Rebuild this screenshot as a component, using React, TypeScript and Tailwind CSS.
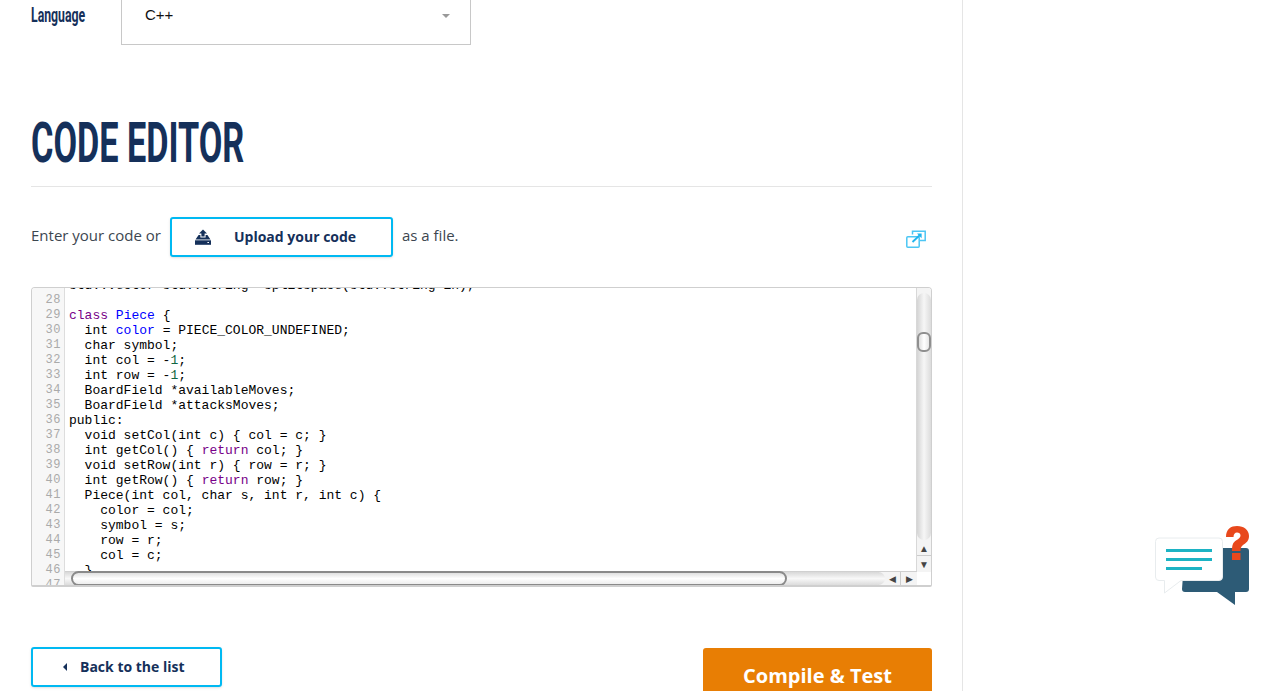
const CODE_LINES: { n: number; parts: [string, string?][] }[] = [
  { n: 27, parts: [["std::vector<std::string> splitspace(std::string in);"]] },
  { n: 28, parts: [[""]] },
  { n: 29, parts: [["class", "text-[#770088]"], [" "], ["Piece", "text-[#0000ff]"], [" {"]] },
  { n: 30, parts: [["  int "], ["color", "text-[#0000ff]"], [" = PIECE_COLOR_UNDEFINED;"]] },
  { n: 31, parts: [["  char symbol;"]] },
  { n: 32, parts: [["  int col = -"], ["1", "text-[#116644]"], [";"]] },
  { n: 33, parts: [["  int row = -"], ["1", "text-[#116644]"], [";"]] },
  { n: 34, parts: [["  BoardField *availableMoves;"]] },
  { n: 35, parts: [["  BoardField *attacksMoves;"]] },
  { n: 36, parts: [["public:"]] },
  { n: 37, parts: [["  void setCol(int c) { col = c; }"]] },
  { n: 38, parts: [["  int getCol() { "], ["return", "text-[#770088]"], [" col; }"]] },
  { n: 39, parts: [["  void setRow(int r) { row = r; }"]] },
  { n: 40, parts: [["  int getRow() { "], ["return", "text-[#770088]"], [" row; }"]] },
  { n: 41, parts: [["  Piece(int col, char s, int r, int c) {"]] },
  { n: 42, parts: [["    color = col;"]] },
  { n: 43, parts: [["    symbol = s;"]] },
  { n: 44, parts: [["    row = r;"]] },
  { n: 45, parts: [["    col = c;"]] },
  { n: 46, parts: [["  }"]] },
  { n: 47, parts: [[""]] },
]

function UploadIcon() {
  return (
    <svg width="16" height="16" viewBox="0 0 16 16" className="text-[#15305a]">
      <path fill="currentColor" d="M8 0.5 L12 4.5 H9.6 V7.5 H6.4 V4.5 H4 Z" />
      <path fill="currentColor" d="M3.6 6 H5.4 V8.6 H10.6 V6 H12.4 L15.5 10.5 H0.5 Z" />
      <path fill="currentColor" d="M0 11.3 H16 V15.8 H0 Z" />
      <rect x="12.4" y="13" width="1.6" height="1" fill="#fff" />
    </svg>
  )
}

function PopoutIcon() {
  return (
    <svg width="20" height="18" viewBox="0 0 20 18" fill="none" stroke="#4cc6f4" strokeWidth="1.5">
      <path d="M6.5 4.5 V1.2 H19.2 V10.5 H14" />
      <rect x="0.8" y="6.8" width="12.4" height="10.4" rx="1" />
      <path d="M6.5 12 L14.5 4.5" strokeWidth="1.8" stroke="#1fb4ee" />
      <path d="M11 3.6 H15.6 V8.2 Z" fill="#1fb4ee" stroke="none" />
    </svg>
  )
}

function ChatIcon() {
  return (
    <svg width="96" height="81" viewBox="0 0 96 81" className="absolute left-[1155px] top-[525px]">
      <path d="M30 23 H91 a3 3 0 0 1 3 3 V64 a3 3 0 0 1 -3 3 H80 V80 L62 67 H30 a3 3 0 0 1 -3 -3 Z" fill="#2d5b76" />
      <path
        d="M4 13 H64 a3.500 3.500 0 0 1 3.500 3.500 V52 a3.500 3.500 0 0 1 -3.500 3.500 H26 L9.500 68 V55.500 H4 a3.500 3.500 0 0 1 -3.500 -3.500 V16.500 a3.500 3.500 0 0 1 3.500 -3.500 Z"
        fill="#fff"
        stroke="#e8ecee"
        strokeWidth="1"
      />
      <rect x="11" y="24" width="46" height="3" fill="#1cb3c4" />
      <rect x="11" y="33" width="46" height="3" fill="#1cb3c4" />
      <rect x="11" y="42" width="36" height="3" fill="#1cb3c4" />
      <path
        d="M71 12 C71 4 76 1 82 1 C89 1 94 5 94 11 C94 16 91 18 88 20 C86 21.500 85.500 23 85.500 26 H77 C77 20 78 17.500 81 15.500 C84 13.500 85.500 12.500 85.500 10.500 C85.500 8.500 84 7.500 82 7.500 C80 7.500 78.500 9 78.500 12 Z"
        fill="#e8481c"
      />
      <rect x="77" y="28" width="8.500" height="7" fill="#e8481c" />
    </svg>
  )
}

function Editor() {
  return (
    <div className="relative h-[300px] w-[901px] overflow-hidden rounded-t-[4px] rounded-b-[2px] border border-[#cfcfcf] border-b-2 bg-white">
      <div className="mt-[-10px] font-['Liberation_Mono',monospace] text-[13px] leading-[15px] text-black">
        {CODE_LINES.map((line) => (
          <div key={line.n} className="flex h-[15px]">
            <div className="w-[33px] shrink-0 border-r border-[#dddddd] bg-[#f7f7f7] pr-[3px] text-right text-[12px] tracking-[0.6px] text-[#aaaaaa]">
              {line.n}
            </div>
            <pre className="pl-[4px] font-['Liberation_Mono',monospace]">
              {line.parts.map(([text, color], i) => (
                <span key={i} className={color}>
                  {text}
                </span>
              ))}
            </pre>
          </div>
        ))}
      </div>

      {/* vertical scrollbar */}
      <div className="absolute right-0 top-0 flex h-[284px] w-[15px] flex-col border-l border-[#d8d8d8] bg-[#f4f4f4]">
        <div className="h-[5px] shrink-0 bg-[#f4f4f4]" />
        <div className="relative h-[247px] rounded-[8px] bg-gradient-to-r from-[#d4d4d4] via-[#f6f6f6] to-[#dcdcdc]">
          <div className="absolute left-0 top-[39px] h-[20px] w-[14px] rounded-[6px] border-2 border-[#8f8f8f] bg-gradient-to-r from-[#dddddd] via-white to-[#e6e6e6]" />
        </div>
        <div className="flex h-[16px] items-center justify-center border-b border-[#cccccc] text-[10px] leading-none text-[#444444]">▲</div>
        <div className="flex h-[16px] items-center justify-center text-[10px] leading-none text-[#444444]">▼</div>
      </div>

      {/* horizontal scrollbar */}
      <div className="absolute bottom-0 left-[33px] flex h-[14px] w-[852px] border-t border-[#d0d0d0] bg-[#f4f4f4]">
        <div className="relative w-[820px] rounded-r-[8px] bg-gradient-to-b from-[#d8d8d8] via-[#f8f8f8] to-[#dcdcdc]">
          <div className="absolute left-[6px] top-[-1px] h-[15px] w-[716px] rounded-[8px] border-2 border-[#8a8a8a] bg-gradient-to-b from-[#e0e0e0] via-white to-[#eeeeee]" />
        </div>
        <div className="flex w-[16px] items-center justify-center border-r border-[#cccccc] text-[9px] leading-none text-[#444444]">◀</div>
        <div className="flex w-[16px] items-center justify-center text-[9px] leading-none text-[#444444]">▶</div>
      </div>
    </div>
  )
}

export default function App() {
  return (
    <div className="relative h-[691px] w-[1270px] overflow-hidden bg-white font-['Open_Sans',sans-serif]">
      <div className="h-[691px] w-[963px] border-r border-[#e5e5e5] pl-[31px] pr-[30px]">
        <div className="flex w-[440px]">
          <div className="w-[90px] pt-[2px] font-['Roboto',sans-serif] text-[20px] font-bold leading-[26px] text-[#15305a]">
            <span className="inline-block origin-left scale-x-[.614] whitespace-nowrap">Language</span>
          </div>
          <div className="mt-[-16px] flex h-[61px] w-[350px] items-center justify-between border border-[#c8c8c8] pl-[23px] pr-[20px] pt-[2px] font-['Liberation_Sans',sans-serif] text-[15px] text-[#111111]">
            <span>C++</span>
            <div className="h-0 w-0 border-x-[4px] border-t-[4px] border-x-transparent border-t-[#999999]" />
          </div>
        </div>

        <div className="mt-[67px] h-[75px] border-b border-[#e5e5e5] font-['Roboto',sans-serif] text-[56px] font-bold leading-[62px] text-[#15305a]">
          <span className="inline-block origin-left scale-x-[.611] whitespace-nowrap">CODE EDITOR</span>
        </div>

        <div className="mt-[30px] flex h-[40px] items-center text-[15px] text-[#3c4650]">
          <span className="mb-[4px]">Enter your code or</span>
          <button className="ml-[9px] flex h-[40px] w-[223px] items-center rounded-[3px] border-2 border-[#00b9f2] pl-[23px] text-[14px] font-bold text-[#15305a] shadow-sm">
            <UploadIcon />
            <span className="mb-[2px] ml-[23px]">Upload your code</span>
          </button>
          <span className="mb-[4px] ml-[9px]">as a file.</span>
          <div className="ml-auto mr-[6px] mt-[4px]">
            <PopoutIcon />
          </div>
        </div>

        <div className="mt-[30px]">
          <Editor />
        </div>

        <div className="mt-[60px] flex items-start justify-between">
          <button className="flex h-[40px] w-[191px] items-center rounded-[3px] border-2 border-[#00b9f2] pl-[30px] text-[14px] font-bold text-[#15305a] shadow-sm">
            <div className="h-0 w-0 border-y-[4px] border-r-[4px] border-y-transparent border-r-[#15305a]" />
            <span className="mb-[2px] ml-[13px]">Back to the list</span>
          </button>
          <button className="mt-[1px] h-[56px] w-[229px] rounded-[3px] bg-[#e87e04] text-[20px] font-bold text-white">
            Compile &amp; Test
          </button>
        </div>
      </div>

      <ChatIcon />
    </div>
  )
}
